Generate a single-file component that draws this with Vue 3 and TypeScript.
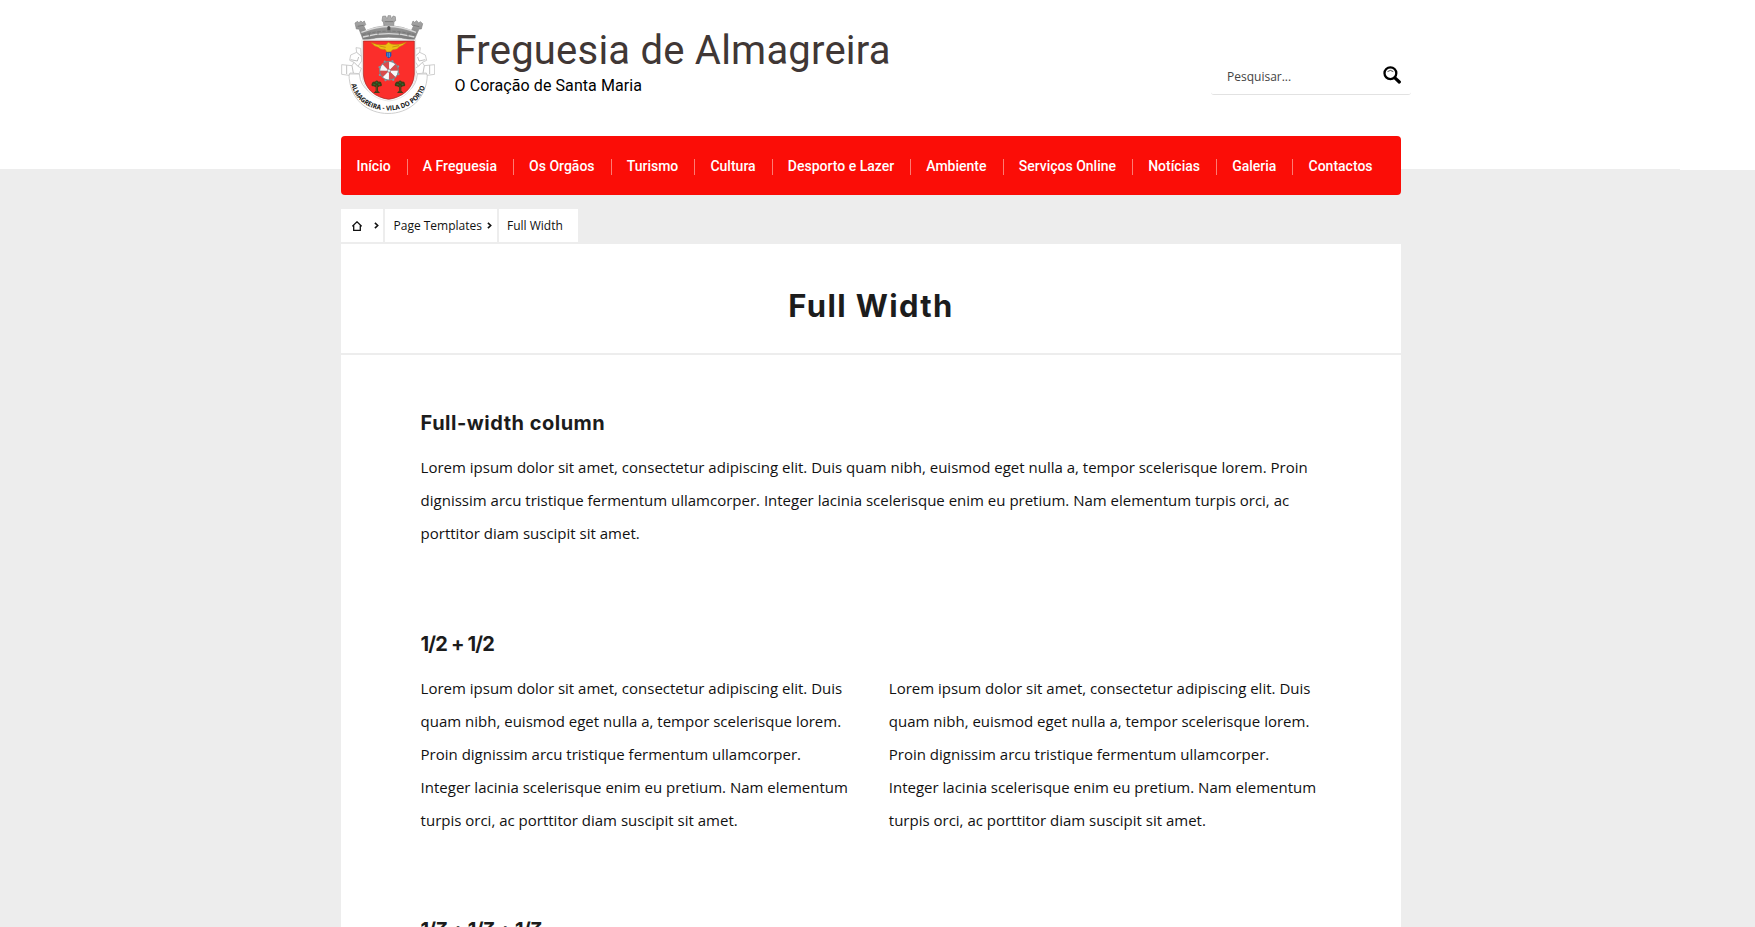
<script setup lang="ts">
const navItems: string[] = [
  'Início', 'A Freguesia', 'Os Orgãos', 'Turismo', 'Cultura', 'Desporto e Lazer',
  'Ambiente', 'Serviços Online', 'Notícias', 'Galeria', 'Contactos',
]

const lorem =
  'Lorem ipsum dolor sit amet, consectetur adipiscing elit. Duis quam nibh, euismod eget nulla a, tempor scelerisque lorem. Proin dignissim arcu tristique fermentum ullamcorper. Integer lacinia scelerisque enim eu pretium. Nam elementum turpis orci, ac porttitor diam suscipit sit amet.'

interface Section {
  title: string
  columns: number
  tight: boolean
}

const sections: Section[] = [
  { title: 'Full-width column', columns: 1, tight: false },
  { title: '1/2 + 1/2', columns: 2, tight: true },
  { title: '1/3 + 1/3 + 1/3', columns: 0, tight: true },
]

const wheelAngles: number[] = [0, 45, 90, 135, 180, 225, 270, 315]
</script>

<template>
  <div class="page">
    <header class="header">
      <div class="container header-row">
        <a class="brand">
          <svg class="crest" viewBox="33 30 282 300" aria-hidden="true">
            <defs>
              <path id="motto" d="M64 238 C84 343 268 343 288 234" />
              <linearGradient id="stone" x1="0" y1="0" x2="0" y2="1">
                <stop offset="0" stop-color="#b5b5b5" />
                <stop offset="1" stop-color="#777" />
              </linearGradient>
            </defs>
            <!-- ribbon -->
            <g fill="#fff" stroke="#c4c4c4" stroke-width="2.5" stroke-linejoin="round">
              <path d="M57 207 C58 365 290 365 292 207 L262 207 C258 300 94 300 88 207 Z" />
              <path d="M92 130 L78 128 L80 142 L62 150 L59 166 L72 172 L66 182 L35 179 L35 208 L57 211 L60 204 L88 206 L94 190 L84 184 L95 168 Z" />
              <path d="M257 130 L271 128 L269 142 L286 150 L290 166 L277 172 L283 182 L314 179 L314 208 L292 211 L289 204 L261 206 L255 190 L265 184 L254 168 Z" />
            </g>
            <g fill="none" stroke="#b4b4b4" stroke-width="2.5">
              <path d="M80 142 L94 154 M62 164 L82 168 L86 156 M66 182 L70 204 M50 181 V207 M72 172 L84 184" />
              <path d="M269 142 L255 154 M286 164 L267 168 L263 156 M283 182 L279 204 M299 181 V207 M277 172 L265 184" />
            </g>
            <!-- mural crown -->
            <path
              d="M75 54 L83 49 L86 54 L92 48 L98 52 L103 48 L107 59 L102 64 L108 77 Q134 65 162 63 L160 50 L156 48 L158 34 L167 33 L169 39 L173 39 L174 32 L182 32 L183 39 L187 39 L189 33 L196 35 L197 47 L192 50 L191 63 Q218 65 244 77 L250 64 L245 59 L249 48 L254 52 L260 47 L266 54 L271 50 L278 56 L274 72 L267 72 L252 106 Q176 87 100 106 L87 72 L79 72 Z"
              fill="url(#stone)" stroke="#858585" stroke-width="2"
            />
            <g fill="none" stroke="#d8d8d8" stroke-width="4">
              <path d="M94 82 L103 79 Q176 50 250 79 L258 82" />
              <path d="M99 96 Q176 76 253 96" />
            </g>
            <g fill="none" stroke="#7a7a7a" stroke-width="3">
              <path d="M98 89 Q176 68 254 89" stroke-dasharray="10 5" />
              <path d="M164 50 H190 M83 64 L101 61 M250 61 L268 65 M118 84 V95 M144 79 V89 M208 79 V89 M234 84 V95" />
            </g>
            <path d="M172 76 V66 Q176 60 181 66 V76 Z" fill="#555" />
            <!-- shield -->
            <path d="M96 104 H257 V207 C255 258 216 284 176 288 C137 284 98 258 96 207 Z" fill="#fff" stroke="#ccc" stroke-width="1.5" />
            <path d="M100 108 H253 V207 C251 253 214 278 176 283 C138 278 102 253 100 207 Z" fill="#fb2e2b" stroke="#9c2825" stroke-width="2" />
            <!-- eagle -->
            <path d="M124 113 Q146 123 168 119 L175 112 L183 117 Q207 122 229 112 Q219 122 207 126 Q202 134 188 134 L182 140 L171 141 L165 133 Q150 135 145 127 Q132 124 124 113 Z" fill="#eebf13" stroke="#b98c08" stroke-width="1.5" />
            <path d="M148 123 L167 127 M187 126 L207 122" stroke="#ac7a12" stroke-width="2" />
            <path d="M168 142 H184 V151 Q183 157 176 160 Q169 157 168 151 Z" fill="#1e55b5" />
            <path d="M172 147 H180 M172 153 H180" stroke="#8dccea" stroke-width="3" stroke-dasharray="3 2" />
            <!-- wheel -->
            <circle cx="177" cy="197" r="29" fill="#a97e83" />
            <g v-for="(angle, i) in wheelAngles" :key="angle" :transform="`rotate(${angle + 20} 177 197)`">
              <path d="M177 197 L168 171 Q178 166 188 172 Z" :fill="i % 2 ? '#d94b4c' : '#f6f9fa'" />
              <circle cx="177" cy="167" r="3.5" fill="#7f9aa5" />
            </g>
            <circle cx="177" cy="197" r="28" fill="none" stroke="#71868e" stroke-width="2.5" />
            <circle cx="177" cy="197" r="5" fill="#e4edf0" stroke="#8d666b" stroke-width="2" />
            <!-- trees -->
            <g v-for="x in [140, 210]" :key="x" :transform="`translate(${x} 244)`">
              <path d="M-15 -8 Q-12 -16 -5 -14 Q0 -21 6 -14 Q14 -16 15 -7 Q18 0 9 0 L4 3 V13 L10 20 H-9 L-3 13 V3 L-9 0 Q-18 0 -15 -8 Z" fill="#413b16" />
              <path d="M-10 -7 L-4 -4 M5 -8 L10 -4 M-2 -13 L2 -9" stroke="#257536" stroke-width="4" />
              <path d="M0 -3 V16" stroke="#704321" stroke-width="3" />
            </g>
            <text class="motto"><textPath href="#motto" textLength="288" lengthAdjust="spacingAndGlyphs">ALMAGREIRA - VILA DO PORTO</textPath></text>
          </svg>
          <span class="brand-text">
            <span class="brand-name">Freguesia de Almagreira</span>
            <span class="brand-tag">O Coração de Santa Maria</span>
          </span>
        </a>
        <form class="search" @submit.prevent>
          <span class="search-label">Pesquisar...</span>
          <svg class="search-icon" viewBox="0 0 18 18" aria-hidden="true">
            <circle cx="7.4" cy="7.2" r="5.9" fill="none" stroke="#000" stroke-width="2.3" />
            <path d="M4.5 5.6 Q7.3 3.2 10.3 5.6" fill="none" stroke="#333" stroke-width="0.9" />
            <path d="M11.9 11.8 L16.3 16" stroke="#000" stroke-width="3.2" stroke-linecap="round" />
          </svg>
        </form>
      </div>
    </header>

    <main class="container">
      <nav class="nav">
        <a v-for="item in navItems" :key="item" class="nav-item">{{ item }}</a>
      </nav>

      <div class="crumbs">
        <a class="crumb crumb-home">
          <svg class="home" viewBox="0 0 10 10" aria-hidden="true">
            <path d="M0.3 5.3 L5 0.8 L9.7 5.3 M1.7 4.4 V9.3 H8.3 V4.4" fill="none" stroke="#111" stroke-width="1.3" />
          </svg>
          <svg class="chevron" viewBox="0 0 5 7" aria-hidden="true"><path d="M0.9 0.8 L3.7 3.5 L0.9 6.2" /></svg>
        </a>
        <a class="crumb crumb-parent">
          Page Templates
          <svg class="chevron" viewBox="0 0 5 7" aria-hidden="true"><path d="M0.9 0.8 L3.7 3.5 L0.9 6.2" /></svg>
        </a>
        <span class="crumb crumb-current">Full Width</span>
      </div>

      <article class="content">
        <div class="title-bar"><h1 class="title">Full Width</h1></div>
        <div class="sections">
          <section v-for="section in sections" :key="section.title" class="section">
            <h2 class="heading" :class="{ tight: section.tight }">{{ section.title }}</h2>
            <div class="columns">
              <p v-for="n in section.columns" :key="n" class="text">{{ lorem }}</p>
            </div>
          </section>
        </div>
      </article>
    </main>
  </div>
</template>

<style>
body {
  background: #ededed;
}
</style>

<style scoped>
.page {
  height: 927px;
  overflow: hidden;
  background: #ededed;
  color: #111;
  font-family: "Open Sans", sans-serif;
}
.container {
  width: 1060px;
  margin-left: 341px;
}
.header {
  height: 170px;
  background:
    linear-gradient(#ededed, #ededed) 0 169px / 1680px 1px no-repeat,
    #fff;
}
.header-row {
  display: flex;
  justify-content: space-between;
}
.brand {
  display: flex;
  padding-top: 15px;
}
.crest {
  width: 94px;
  height: 100px;
}
.motto {
  font: 700 20.5px "Open Sans", sans-serif;
  fill: #111;
}
.brand-text {
  display: flex;
  flex-direction: column;
  padding: 11px 0 0 19.5px;
  font-family: Roboto, sans-serif;
}
.brand-name {
  color: #403735;
  font-size: 40px;
  line-height: 50px;
  letter-spacing: 0.22px;
}
.brand-tag {
  color: #000;
  font-size: 16px;
  line-height: 20px;
  letter-spacing: 0.08px;
}
.search {
  display: flex;
  justify-content: space-between;
  box-sizing: border-box;
  width: 200px;
  height: 40px;
  margin: 55px -10px 0 0;
  padding: 11px 10px 0 16px;
  border-bottom: 1px solid #e2e2e2;
  border-radius: 3px;
}
.search-label {
  color: #444;
  font-size: 12px;
  line-height: 22px;
}
.search-icon {
  width: 18px;
  height: 18px;
}
.nav {
  display: flex;
  align-items: center;
  box-sizing: border-box;
  height: 59px;
  padding: 2px 0 0 0.4px;
  margin-top: -34px;
  border-radius: 4px;
  background: #fb0d07;
}
.nav-item {
  height: 16px;
  padding: 0 16.1px 0 15.05px;
  border-right: 1px solid #fd7b73;
  color: #fff;
  font: 500 14px/15px Roboto, sans-serif;
  white-space: nowrap;
}
.nav-item:last-child {
  border-right: 0;
}
.crumbs {
  display: flex;
  gap: 2px;
  margin: 14px 0 2px;
}
.crumb {
  display: flex;
  align-items: center;
  box-sizing: border-box;
  height: 33px;
  background: #fff;
  font-size: 12px;
}
.crumb-home {
  width: 42px;
  padding-left: 11px;
  gap: 12px;
}
.crumb-parent {
  width: 112px;
  padding-left: 8.5px;
  gap: 4.5px;
  white-space: nowrap;
}
.crumb-current {
  width: 79px;
  padding-left: 8px;
}
.home {
  width: 10px;
  height: 10px;
}
.chevron {
  width: 5px;
  height: 7px;
  fill: none;
  stroke: #111;
  stroke-width: 1.6;
}
.content {
  background: #fff;
}
.title-bar {
  display: flex;
  justify-content: center;
  box-sizing: border-box;
  height: 111px;
  padding-top: 41px;
  border-bottom: 2px solid #ededed;
}
.title {
  margin: 0;
  color: #1c1c1c;
  font: 650 31px/42px Inter, sans-serif;
  letter-spacing: 1.35px;
}
.sections {
  padding: 53px 80px 0 79.6px;
}
.section {
  height: 221px;
}
.section + .section {
  height: 286px;
}
.heading {
  margin: 0 0 13px;
  color: #1c1c1c;
  font: 700 20px/30px Inter, sans-serif;
  font-feature-settings: "cv09";
  letter-spacing: 0.5px;
}
.heading.tight {
  letter-spacing: -0.85px;
}
.columns {
  display: flex;
  gap: 36px;
}
.text {
  flex: 1;
  margin: 0;
  font-size: 15px;
  line-height: 33px;
}
</style>
